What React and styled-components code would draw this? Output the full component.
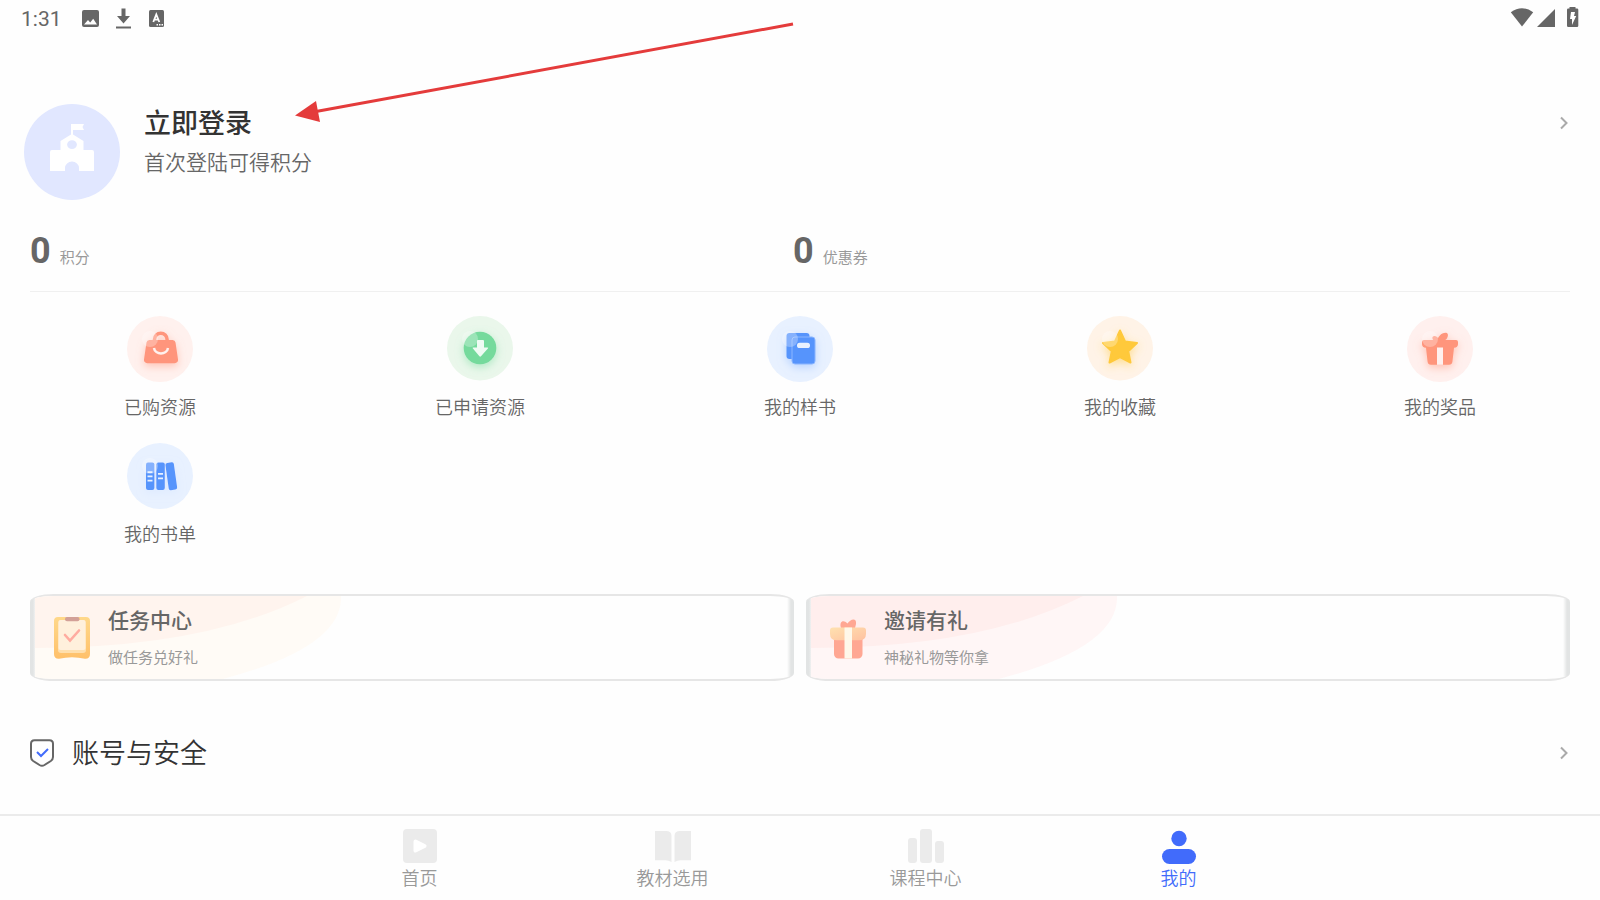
import React from 'react';
import styled, { createGlobalStyle } from 'styled-components';

const GlobalStyle = createGlobalStyle`
  * {
    box-sizing: border-box;
  }
  body {
    margin: 0;
    background-color: #fefefe;
    font-family: Roboto, 'Noto Sans CJK SC', sans-serif;
  }
  a {
    color: inherit;
    text-decoration: none;
  }
  svg {
    display: block;
    flex-shrink: 0;
  }
`;

const Page = styled.div`
  position: relative;
  display: flex;
  flex-direction: column;
  min-height: 100vh;
`;

const StatusBar = styled.header`
  display: flex;
  justify-content: space-between;
  align-items: center;
  height: 36px;
  padding: 0 20px 0 21px;
  color: #666;
`;
const StatusGroup = styled.div`
  display: flex;
  align-items: center;
`;
const Clock = styled.time`
  width: 59px;
  padding-top: 1px;
  font-size: 21px;
  line-height: 24px;
`;

const Profile = styled.a`
  display: flex;
  align-items: flex-start;
  padding: 68px 32px 0 24px;
`;
const ProfileText = styled.div`
  flex: 1;
  padding-left: 24px;
`;
const LoginTitle = styled.h1`
  margin: 0;
  color: #333;
  font-size: 27px;
  line-height: 40px;
  font-weight: 500;
`;
const LoginHint = styled.p`
  margin: 3px 0 0;
  color: #666;
  font-size: 21px;
  line-height: 32px;
  font-weight: 350;
`;
const ChevronBox = styled.span`
  display: flex;
  align-items: center;
  height: 38px;
`;

const Stats = styled.div`
  display: grid;
  grid-template-columns: 1fr 1fr;
  margin: 29px 30px 0;
  padding: 0 14px 18px 0;
  border-bottom: 1px solid #f0f0f0;
`;
const Stat = styled.a`
  display: flex;
  align-items: baseline;
  gap: 9px;
`;
const StatValue = styled.strong`
  color: #666;
  font-size: 36px;
  line-height: 44px;
  font-weight: 700;
`;
const StatLabel = styled.span`
  color: #999;
  font-size: 15px;
  font-weight: 400;
`;

const Menu = styled.nav`
  display: grid;
  grid-template-columns: repeat(5, 1fr);
  row-gap: 22px;
  padding-top: 24px;
`;
const MenuItem = styled.a`
  display: flex;
  flex-direction: column;
  align-items: center;
  gap: 12px;
  color: #666;
  font-size: 18px;
  line-height: 27px;
  font-weight: 350;
`;

const Cards = styled.div`
  display: grid;
  grid-template-columns: 1fr 1fr;
  gap: 12px;
  padding: 46px 30px 0;
`;
const Card = styled.a`
  position: relative;
  display: flex;
  align-items: center;
  height: 87px;
  padding-left: 22px;
  border-top: 2px solid #e6e6e6;
  border-bottom: 2px solid #e6e6e6;
  border-radius: 24px / 8px;
  background: linear-gradient(to right, #e2e4e4 3px, transparent 7px),
    linear-gradient(to left, #e2e4e4 3px, transparent 7px);
  overflow: hidden;
`;
const CardWave = styled.svg`
  position: absolute;
  top: 0;
  left: 5px;
`;
const CardIcon = styled.span`
  position: relative;
  width: 40px;
`;
const CardText = styled.div`
  position: relative;
  padding-left: 16px;
`;
const CardTitle = styled.h2`
  margin: 0;
  color: #666;
  font-size: 21px;
  line-height: 30px;
  font-weight: 500;
`;
const CardHint = styled.p`
  margin: 11px 0 0;
  color: #999;
  font-size: 15px;
  line-height: 22px;
`;

const SettingRow = styled.a`
  display: flex;
  align-items: center;
  gap: 17px;
  padding: 50px 32px 20px 29px;
  color: #333;
  font-size: 27px;
  line-height: 40px;
  font-weight: 350;
`;
const SettingName = styled.span`
  flex: 1;
  padding-top: 3px;
`;

const TabBar = styled.nav`
  display: flex;
  justify-content: center;
  margin-top: auto;
  height: 86px;
  padding-right: 2px;
  border-top: 2px solid #ebebeb;
`;
const Tab = styled.a`
  display: flex;
  flex-direction: column;
  align-items: center;
  gap: 1px;
  width: 253px;
  padding-top: 12px;
  color: ${(props) => (props.$active ? '#416bfb' : '#999')};
  font-size: 18px;
  line-height: 27px;
  font-weight: 350;
`;

const Pointer = styled.svg`
  position: absolute;
  top: 0;
  left: 0;
  pointer-events: none;
`;

const Chevron = () => (
  <svg width="8" height="14" viewBox="0 0 8 14" fill="none" stroke="#aaa" strokeWidth="2">
    <path d="M1 1.5 6.5 7 1 12.5" />
  </svg>
);

const StatusIcons = () => (
  <svg width="86" height="24" viewBox="80 6 86 24" fill="#666">
    <path
      fillRule="evenodd"
      d="M84 10h13a2 2 0 0 1 2 2v13a2 2 0 0 1-2 2H84a2 2 0 0 1-2-2V12a2 2 0 0 1 2-2zM84 24.5h13l-3.800-5.800-3 3.800-2.200-2.500z"
    />
    <path d="M121.500 8.500h4V16h4.500l-6.500 7.500L117 16h4.500zM116 26.500h15v2h-15z" />
    <path
      fillRule="evenodd"
      d="M150.500 10h12a1.500 1.500 0 0 1 1.500 1.500v14a1.500 1.500 0 0 1-1.500 1.500h-12a1.500 1.500 0 0 1-1.500-1.500v-14a1.500 1.500 0 0 1 1.500-1.500z"
    />
    <path d="m153.300 22 3-7.500 3 7.500M154.500 19.700h3.800" fill="none" stroke="#fff" strokeWidth="1.800" />
    <path d="M156.500 24h1.500v1.500h-1.500zM159 24h1.500v1.500H159zM161.500 24h1.500v1.500h-1.500z" fill="#fff" />
  </svg>
);

const SystemIcons = () => (
  <svg width="70" height="24" viewBox="1510 6 70 24" fill="#666">
    <path d="M1510.800 12.300q11.200-8.300 22.400 0L1522 26.600z" />
    <path d="M1555 9v18h-18z" />
    <path d="M1569.500 8.500V7h6v1.500h1.500a1.300 1.300 0 0 1 1.300 1.300v15.900a1.300 1.300 0 0 1-1.300 1.300h-8.700a1.300 1.300 0 0 1-1.300-1.300V9.800a1.300 1.300 0 0 1 1.300-1.300z" />
    <path d="M1571 12h4l-1 4h2.200l-4.200 9v-6h-2z" fill="#fff" />
  </svg>
);

const Avatar = () => (
  <svg width="96" height="96" viewBox="0 0 96 96">
    <circle cx="48" cy="48" r="48" fill="#e1e7ff" />
    <path
      fill="#fff"
      fillRule="evenodd"
      d="M47 20h13l-1.500 3 1.500 3H49v4.500L59.500 37v9H68a2 2 0 0 1 2 2v19H55v-3a7 6.500 0 0 0-14 0v3H26V48a2 2 0 0 1 2-2h8.500v-9L47 30.500zM48 36.300a4.900 4.300 0 1 0 0 8.600 4.900 4.300 0 1 0 0-8.600z"
    />
  </svg>
);

const Bubble = ({ name, bg, shadow, ry = 33, children }) => (
  <svg width="66" height="66" viewBox="0 0 66 66">
    <defs>
      <filter id={`${name}-shadow`} x="-50%" y="-50%" width="200%" height="200%">
        <feDropShadow dx="0" dy="3" stdDeviation="4" floodColor={shadow} floodOpacity="0.5" />
      </filter>
    </defs>
    <ellipse cx="33" cy={ry} rx="33" ry={ry} fill={bg} />
    <g filter={`url(#${name}-shadow)`}>{children}</g>
    <circle cx="23" cy="23" r="8" fill="#fff" opacity="0.28" />
  </svg>
);

const BagIcon = () => (
  <Bubble name="bag" bg="#fff1ee" shadow="#ff957b">
    <path d="M27.500 25.500v-2a6.200 6.200 0 0 1 12.600 0v2" fill="none" stroke="#ff957b" strokeWidth="3.500" />
    <path
      fill="#ff957b"
      d="M22.500 24h23a3 3 0 0 1 3 2.500L51 43.500a3.200 3.200 0 0 1-3.200 3.700H20.200a3.200 3.200 0 0 1-3.200-3.700l2.500-17a3 3 0 0 1 3-2.500z"
    />
    <path d="M27 32c1 7.300 13 7.300 14 0" fill="none" stroke="#fff1ee" strokeWidth="2.500" />
  </Bubble>
);

const DownloadIcon = () => (
  <Bubble name="download" bg="#eaf7eb" shadow="#74da9c" ry={32.2}>
    <circle cx="33" cy="32" r="16.300" fill="#74da9c" />
    <path
      d="M30.500 24h5.500a1 1 0 0 1 1 1v6.500h3.500q1.200 0 .4 1L34 40.300q-.8.900-1.600 0L25.900 32.500q-.8-1 .4-1H30V25a1 1 0 0 1 .5-1z"
      fill="#effbf3"
    />
  </Bubble>
);

const SampleIcon = () => (
  <Bubble name="sample" bg="#e8f1ff" shadow="#8db8ff">
    <rect x="19.500" y="17" width="23" height="26" rx="3" fill="#5694fc" />
    <rect x="25" y="21" width="23" height="27" rx="3" fill="#5694fc" stroke="#8ab5ff" />
    <rect x="30" y="26.700" width="13" height="5.300" rx="2.600" fill="#e8f1ff" />
  </Bubble>
);

const StarIcon = () => (
  <Bubble name="star" bg="#fff3e7" shadow="#ffc93a" ry={32.2}>
    <path
      d="M33 14.500 38 25.500 50 27 41.200 35.300 43.500 46.500 33 41 22.500 46.500 24.800 35.300 16 27 28 25.500z"
      fill="#ffc93a"
      stroke="#ffc93a"
      strokeWidth="2"
      strokeLinejoin="round"
    />
  </Bubble>
);

const PrizeIcon = () => (
  <Bubble name="prize" bg="#fff0ee" shadow="#ff957b">
    <path d="M30 25c1-4 4-8.500 9-8.300 3 .6 2 4 .5 6.300L37 25zM30 25c-3 0-5-1-4.500-4 1.500-2 4-1 5.500 1z" fill="#ff957b" />
    <path
      fill="#ff957b"
      d="M17 24h32a2 2 0 0 1 2 2v2q0 3.500-4 3.800l-1.600 14q-.4 3-3.400 3H24q-3 0-3.400-3L19 31.800q-4-.3-4-3.800v-2a2 2 0 0 1 2-2z"
    />
    <path d="M30 31.500h6v17.300h-6z" fill="#fff0ee" />
  </Bubble>
);

const BooksIcon = () => (
  <Bubble name="books" bg="#e8f1ff" shadow="#d0e2ff">
    <rect x="19" y="19.500" width="8.400" height="27.500" rx="2" fill="#5694fc" />
    <rect x="29.300" y="19.500" width="8.500" height="27.500" rx="2" fill="#5694fc" />
    <rect x="40" y="19.500" width="8.500" height="27.500" rx="2" fill="#5694fc" transform="rotate(-8 44 33)" />
    <path d="M20.500 29.200h5M20.500 33.300h5M20.500 37.600h5M31 30.800h5M31 35.400h5" stroke="#e8f1ff" strokeWidth="1.800" />
  </Bubble>
);

const TaskIcon = () => (
  <svg width="40" height="44" viewBox="0 0 40 44">
    <defs>
      <linearGradient id="task-board" x1="0" y1="0" x2="0" y2="1">
        <stop offset="0" stopColor="#ffd88a" />
        <stop offset="1" stopColor="#ffc06a" />
      </linearGradient>
    </defs>
    <path d="M6 1h28a4 4 0 0 1 4 4v33q0 5-5 4.800-13-3-26 0Q2 43 2 38V5a4 4 0 0 1 4-4z" fill="url(#task-board)" />
    <rect x="6" y="4" width="28" height="33" rx="3" fill="#ffdfad" />
    <rect x="6.500" y="4" width="27" height="30" rx="2" fill="#fff0dc" />
    <rect x="13" y="1" width="14.500" height="4.300" rx="2" fill="#d3a097" />
    <path d="m13 19 5 5.500 9-10" fill="none" stroke="#ffaca0" strokeWidth="2.600" strokeLinecap="round" />
  </svg>
);

const GiftIcon = () => (
  <svg width="40" height="44" viewBox="0 0 40 44">
    <defs>
      <linearGradient id="gift-lid" x1="0" y1="0" x2="1" y2="1">
        <stop offset="0" stopColor="#ffe1b0" />
        <stop offset="1" stopColor="#ffc1a0" />
      </linearGradient>
    </defs>
    <path d="M13 12c-2-6 2-9 6.500-4.500C22 3 29 1 28 8l-1 4z" fill="#ffa793" />
    <path d="M6 23h28.500v15a4.500 4.500 0 0 1-4.500 4.500H10.500A4.500 4.500 0 0 1 6 38z" fill="#ffa793" />
    <path d="M5 11.500h30a3 3 0 0 1 3 3V18q0 6.300-7 6.300H9Q2 24.300 2 18v-3.500a3 3 0 0 1 3-3z" fill="url(#gift-lid)" />
    <path d="M16.500 11.500H24v31h-7.500z" fill="#fff8ea" />
  </svg>
);

const ShieldIcon = () => (
  <svg width="26" height="28" viewBox="0 0 26 28" fill="none" strokeWidth="2">
    <path d="M5.500 1.200h15q3.500 0 3.500 3.500V18q0 2.500-2.200 4l-6.300 4q-2.500 1.500-5 0l-6.300-4Q2 20.500 2 18V4.700q0-3.500 3.500-3.500z" stroke="#666" />
    <path d="m8 13 4 4 7-7" stroke="#416bfb" />
  </svg>
);

const HomeIcon = () => (
  <svg width="36" height="36" viewBox="0 0 36 36">
    <rect x="1" y="1" width="34" height="34" rx="4" fill="#ebebeb" />
    <path d="M13.500 13.500 22.500 18l-9 4.500z" fill="#fff" stroke="#fff" strokeWidth="4" strokeLinejoin="round" />
  </svg>
);

const BookIcon = () => (
  <svg width="36" height="36" viewBox="0 0 36 36" fill="#ebebeb">
    <path d="M0 3h11q5.500 0 5.500 5v26q-3-1.700-6-1.700H0zM36 3H25q-5.500 0-5.500 5v26q3-1.700 6-1.700H36z" />
  </svg>
);

const BarsIcon = () => (
  <svg width="36" height="36" viewBox="0 0 36 36" fill="#ebebeb">
    <rect x="0" y="10" width="9" height="25" rx="3" />
    <rect x="12" y="1" width="12" height="34" rx="3" />
    <rect x="27" y="13" width="9" height="22" rx="3" />
  </svg>
);

const UserIcon = () => (
  <svg width="36" height="36" viewBox="0 0 36 36" fill="#416bfb">
    <circle cx="18" cy="10.500" r="7.700" />
    <rect x="1" y="21" width="34" height="15" rx="7.500" />
  </svg>
);

const menu = [
  { name: '已购资源', icon: BagIcon },
  { name: '已申请资源', icon: DownloadIcon },
  { name: '我的样书', icon: SampleIcon },
  { name: '我的收藏', icon: StarIcon },
  { name: '我的奖品', icon: PrizeIcon },
  { name: '我的书单', icon: BooksIcon },
];

const cards = [
  { title: '任务中心', hint: '做任务兑好礼', icon: TaskIcon, outer: '#fffbf6', inner: '#fff4ee' },
  { title: '邀请有礼', hint: '神秘礼物等你拿', icon: GiftIcon, outer: '#fff6f6', inner: '#ffeeed' },
];

const tabs = [
  { name: '首页', icon: HomeIcon },
  { name: '教材选用', icon: BookIcon },
  { name: '课程中心', icon: BarsIcon },
  { name: '我的', icon: UserIcon, active: true },
];

const App = () => {
  return (
    <>
      <GlobalStyle />
      <Page>
        <StatusBar>
          <StatusGroup>
            <Clock>1:31</Clock>
            <StatusIcons />
          </StatusGroup>
          <SystemIcons />
        </StatusBar>
        <Profile href="#login">
          <Avatar />
          <ProfileText>
            <LoginTitle>立即登录</LoginTitle>
            <LoginHint>首次登陆可得积分</LoginHint>
          </ProfileText>
          <ChevronBox>
            <Chevron />
          </ChevronBox>
        </Profile>
        <Stats>
          <Stat href="#points">
            <StatValue>0</StatValue>
            <StatLabel>积分</StatLabel>
          </Stat>
          <Stat href="#coupons">
            <StatValue>0</StatValue>
            <StatLabel>优惠券</StatLabel>
          </Stat>
        </Stats>
        <Menu>
          {menu.map(({ name, icon: Icon }) => (
            <MenuItem href="#menu" key={name}>
              <Icon />
              {name}
            </MenuItem>
          ))}
        </Menu>
        <Cards>
          {cards.map(({ title, hint, icon: Icon, outer, inner }) => (
            <Card href="#card" key={title}>
              <CardWave width="308" height="84" viewBox="0 0 308 84">
                <path d="M0 0h306q2 52-122 84H0z" fill={outer} />
                <path d="M0 0h272Q170 52 0 52z" fill={inner} />
              </CardWave>
              <CardIcon>
                <Icon />
              </CardIcon>
              <CardText>
                <CardTitle>{title}</CardTitle>
                <CardHint>{hint}</CardHint>
              </CardText>
            </Card>
          ))}
        </Cards>
        <SettingRow href="#account">
          <ShieldIcon />
          <SettingName>账号与安全</SettingName>
          <Chevron />
        </SettingRow>
        <TabBar>
          {tabs.map(({ name, icon: Icon, active }) => (
            <Tab href="#tab" key={name} $active={active}>
              <Icon />
              {name}
            </Tab>
          ))}
        </TabBar>
        <Pointer width="800" height="130" viewBox="0 0 800 130">
          <path d="M793 24 316 111.500" stroke="#e43b3b" strokeWidth="3" />
          <path d="m295 115.500 21-14.500 4 21z" fill="#e43b3b" />
        </Pointer>
      </Page>
    </>
  );
};

export default App;
